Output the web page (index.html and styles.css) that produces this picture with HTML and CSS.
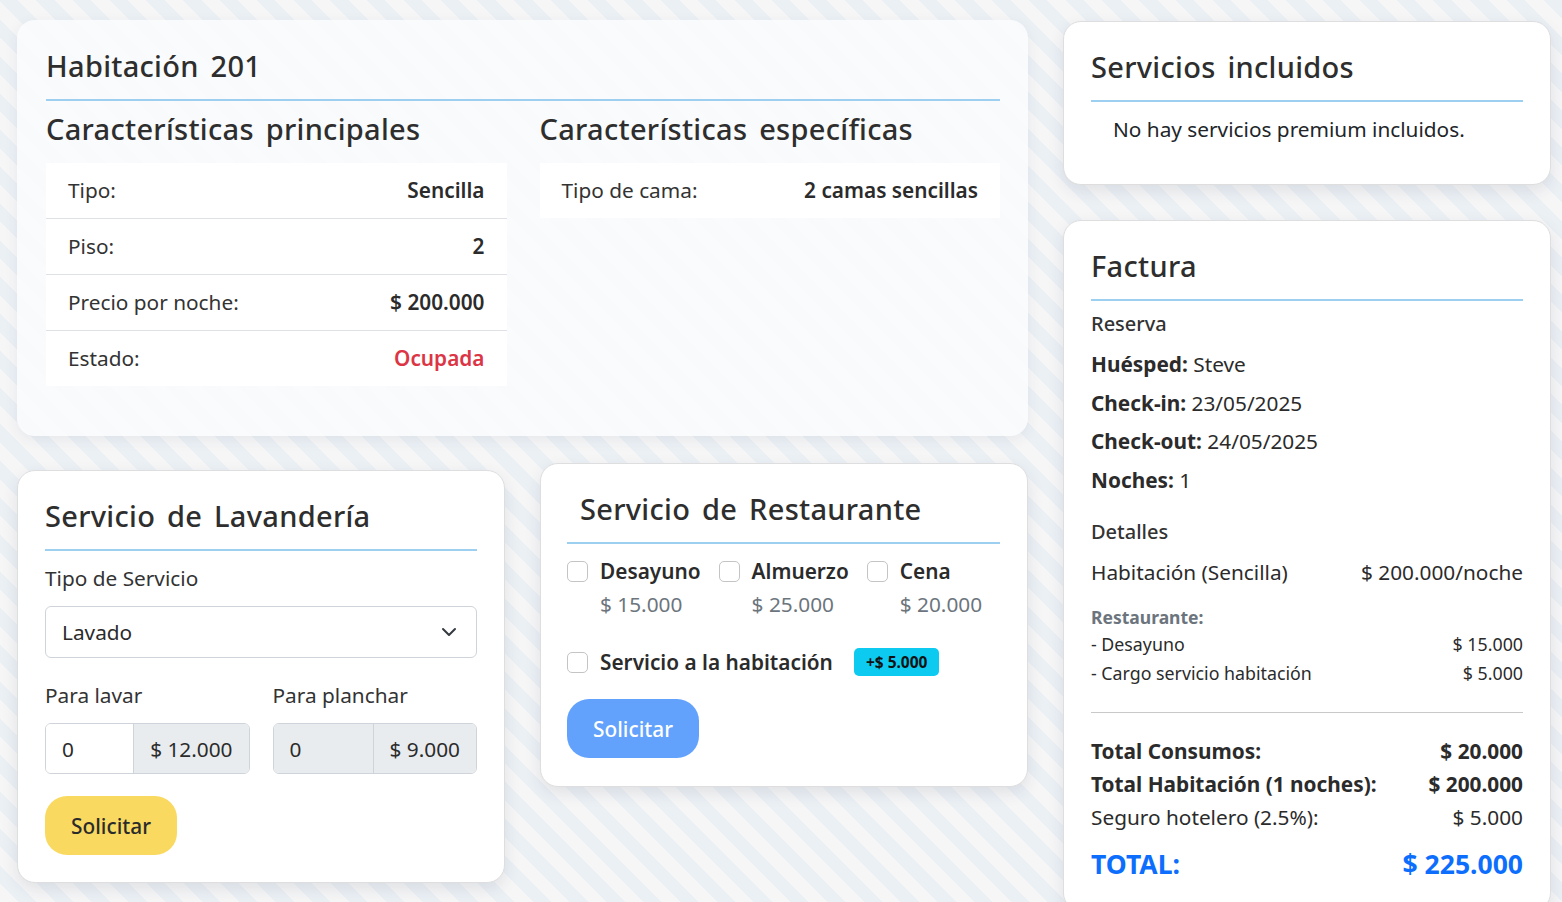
FILE: index.html
```html
<!DOCTYPE html>
<html lang="es">
<head>
<meta charset="utf-8">
<title>Habitación 201</title>
<link rel="stylesheet" href="styles.css">
</head>
<body>
<div class="page">
  <div class="main">
    <section class="card glass room">
      <h2 class="card-title">Habitación 201</h2>
      <div class="cols">
        <div class="col">
          <h3 class="sub-title">Características principales</h3>
          <div class="kv">
            <div class="kv-row"><span>Tipo:</span><strong>Sencilla</strong></div>
            <div class="kv-row"><span>Piso:</span><strong>2</strong></div>
            <div class="kv-row"><span>Precio por noche:</span><strong>$ 200.000</strong></div>
            <div class="kv-row"><span>Estado:</span><strong class="danger">Ocupada</strong></div>
          </div>
        </div>
        <div class="col">
          <h3 class="sub-title">Características específicas</h3>
          <div class="kv">
            <div class="kv-row"><span>Tipo de cama:</span><strong>2 camas sencillas</strong></div>
          </div>
        </div>
      </div>
    </section>

    <section class="card laundry">
      <h2 class="card-title">Servicio de Lavandería</h2>
      <label class="field-label">Tipo de Servicio</label>
      <div class="select">
        <span>Lavado</span>
        <svg class="chev" width="16" height="16" viewBox="0 0 16 16"><path d="M2 5l6 6 6-6" fill="none" stroke="#343a40" stroke-width="2" stroke-linecap="round" stroke-linejoin="round"/></svg>
      </div>
      <div class="pair">
        <div class="pair-col">
          <label class="field-label">Para lavar</label>
          <div class="igroup">
            <span class="iinput">0</span>
            <span class="iaddon">$ 12.000</span>
          </div>
        </div>
        <div class="pair-col">
          <label class="field-label">Para planchar</label>
          <div class="igroup disabled">
            <span class="iinput">0</span>
            <span class="iaddon">$ 9.000</span>
          </div>
        </div>
      </div>
      <button class="btn btn-yellow">Solicitar</button>
    </section>

    <section class="card restaurant">
      <h2 class="card-title indented">Servicio de Restaurante</h2>
      <div class="meals">
        <div class="meal">
          <span class="check"></span>
          <div class="meal-text"><b>Desayuno</b><span class="price">$ 15.000</span></div>
        </div>
        <div class="meal">
          <span class="check"></span>
          <div class="meal-text"><b>Almuerzo</b><span class="price">$ 25.000</span></div>
        </div>
        <div class="meal">
          <span class="check"></span>
          <div class="meal-text"><b>Cena</b><span class="price">$ 20.000</span></div>
        </div>
      </div>
      <div class="room-service">
        <span class="check"></span>
        <b>Servicio a la habitación</b>
        <span class="badge">+$ 5.000</span>
      </div>
      <button class="btn btn-blue">Solicitar</button>
    </section>
  </div>

  <aside class="side">
    <section class="card included">
      <h2 class="card-title">Servicios incluidos</h2>
      <p class="empty">No hay servicios premium incluidos.</p>
    </section>

    <section class="card invoice">
      <h2 class="card-title">Factura</h2>
      <h4 class="inv-head first">Reserva</h4>
      <div class="info">
        <p><b>Huésped:</b> Steve</p>
        <p><b>Check-in:</b> 23/05/2025</p>
        <p><b>Check-out:</b> 24/05/2025</p>
        <p><b>Noches:</b> 1</p>
      </div>
      <h4 class="inv-head">Detalles</h4>
      <div class="line main-line"><span>Habitación (Sencilla)</span><span>$ 200.000/noche</span></div>
      <div class="group-label">Restaurante:</div>
      <div class="line small"><span>- Desayuno</span><span>$ 15.000</span></div>
      <div class="line small"><span>- Cargo servicio habitación</span><span>$ 5.000</span></div>
      <hr class="sep">
      <div class="line total-row bold first-total"><span>Total Consumos:</span><span>$ 20.000</span></div>
      <div class="line total-row bold"><span>Total Habitación (1 noches):</span><span>$ 200.000</span></div>
      <div class="line total-row"><span>Seguro hotelero (2.5%):</span><span>$ 5.000</span></div>
      <div class="line grand"><span>TOTAL:</span><span>$ 225.000</span></div>
    </section>
  </aside>
</div>
</body>
</html>
```

FILE: styles.css
```css
* { box-sizing: border-box; }

html, body { height: 100%; }

body {
  margin: 0;
  font-family: "Noto Sans", sans-serif;
  font-size: 20.8px;
  line-height: 30px;
  color: #2b2b2b;
  background: repeating-linear-gradient(45deg, #f6f6f7 0 13px, #ebf0f5 13px 26px);
  overflow: hidden;
}

.page {
  display: flex;
  align-items: flex-start;
  gap: 34px;
  padding: 20px 11px 0 17px;
}

.main {
  width: 1012px;
  display: grid;
  grid-template-columns: 488px 488px;
  column-gap: 35px;
  row-gap: 27px;
  align-items: start;
}

.side {
  width: 488px;
  display: flex;
  flex-direction: column;
  gap: 35px;
  margin-top: 1px;
}

.card {
  background: #fff;
  border: 1px solid #dedede;
  border-radius: 18px;
  box-shadow: 0 6px 16px rgba(40, 50, 70, 0.10);
  padding: 29px 27px 28px;
}

.glass {
  background: rgba(250, 251, 253, 0.84);
  border: none;
  box-shadow: 0 4px 14px rgba(40, 50, 70, 0.07);
}

.room { grid-column: 1 / 3; padding: 30px 28px 50px 29px; }
.laundry { margin-top: 7px; padding-bottom: 27px; }
.restaurant { padding-left: 26px; }

.card-title {
  margin: 0;
  font-family: "Noto Sans", sans-serif;
  font-weight: 500;
  font-size: 29px;
  line-height: 32px;
  letter-spacing: 0.3px;
  word-spacing: 4px;
  color: #2e2e2e;
  padding-bottom: 17px;
  border-bottom: 2px solid #9dd0f0;
}
.card-title.indented { padding-left: 13px; }

.cols {
  display: grid;
  grid-template-columns: 1fr 1fr;
  column-gap: 33px;
  margin-top: 11px;
}

.sub-title {
  margin: 0 0 15px;
  font-family: "Noto Sans", sans-serif;
  font-weight: 500;
  font-size: 29px;
  line-height: 34px;
  padding-bottom: 2px;
  letter-spacing: 0.3px;
  word-spacing: 4px;
  color: #2e2e2e;
}

.kv { background: #fff; }
.kv-row {
  display: flex;
  justify-content: space-between;
  padding: 12px 22px 13px;
  border-bottom: 1px solid #dee2e6;
  line-height: 30px;
}
.kv-row:last-child { border-bottom: none; }
.kv-row span { font-weight: 400; color: #333; }
.kv-row strong { font-weight: 600; }
.danger { color: #dc3545; }

/* Included */
.empty { margin: 12px 0 0; padding-left: 22px; color: #212529; font-weight: 400; padding-bottom: 12px; }

/* Invoice */
.invoice { padding-bottom: 28px; }
.inv-head {
  margin: 20px 0 13px;
  font-size: 20px;
  line-height: 24px;
  font-weight: 500;
  color: #333;
}
.inv-head.first { margin-top: 11px; margin-bottom: 9px; }
.info p { margin: 0; line-height: 38.7px; }
.info b { font-weight: 700; }
.line { display: flex; justify-content: space-between; }
.line.main-line { line-height: 30px; }
.group-label { margin-top: 17px; font-size: 17.5px; line-height: 26px; font-weight: 700; color: #6c757d; }
.line.small { font-size: 17.8px; line-height: 29px; }
.sep { border: none; border-top: 1px solid #c9c9c9; margin: 24px 0 0; height: 0; }
.total-row { line-height: 33px; }
.first-total { margin-top: 22px; }
.bold { font-weight: 700; }
.grand { margin-top: 12px; font-size: 26.5px; line-height: 36px; font-weight: 700; color: #0d6efd; }

/* Laundry */
.field-label { display: block; margin-top: 12px; line-height: 30px; font-weight: 400; color: #333; }
.select {
  margin-top: 13px;
  height: 52px;
  border: 1px solid #ced4da;
  border-radius: 6px;
  display: flex;
  align-items: center;
  justify-content: space-between;
  padding: 0 19px 0 16px;
  background: #fff;
}
.pair { display: grid; grid-template-columns: 1fr 1fr; column-gap: 23px; margin-top: 10px; }
.igroup {
  margin-top: 13px;
  display: flex;
  height: 51px;
  border: 1px solid #ced4da;
  border-radius: 6px;
  overflow: hidden;
}
.iinput { flex: 1; display: flex; align-items: center; padding-left: 16px; background: #fff; }
.iaddon { display: flex; align-items: center; padding: 0 16px; background: #e9ecef; border-left: 1px solid #ced4da; }
.igroup.disabled .iinput { background: #e9ecef; }

.btn {
  display: inline-flex;
  align-items: center;
  justify-content: center;
  border: none;
  font-family: inherit;
  font-size: 20.8px;
  font-weight: 500;
  height: 59px;
  width: 132px;
  padding: 0;
  border-radius: 22px;
}
.btn-yellow { margin-top: 22px; background: #f9d960; color: #2b2b2b; }
.btn-blue { margin-top: 22px; background: #62a2fc; color: #fff; }

/* Restaurant */
.meals { display: flex; gap: 18px; margin-top: 12px; }
.meal { display: flex; gap: 12px; align-items: flex-start; }
.check {
  flex: none;
  width: 21px;
  height: 21px;
  border: 1px solid #c4c4c4;
  border-radius: 5px;
  background: #fff;
  margin-top: 5px;
}
.meal-text { display: flex; flex-direction: column; }
.meal-text b { font-weight: 600; line-height: 30px; }
.price { color: #6c757d; font-weight: 400; line-height: 36px; }
.room-service { display: flex; align-items: center; gap: 12px; margin-top: 25px; }
.room-service .check { margin-top: 0; }
.room-service b { font-weight: 600; }
.badge {
  margin-left: 9px;
  background: #0dcaf0;
  color: #111;
  font-size: 15.5px;
  font-weight: 700;
  line-height: 28px;
  padding: 0 12px;
  border-radius: 5px;
}
```
